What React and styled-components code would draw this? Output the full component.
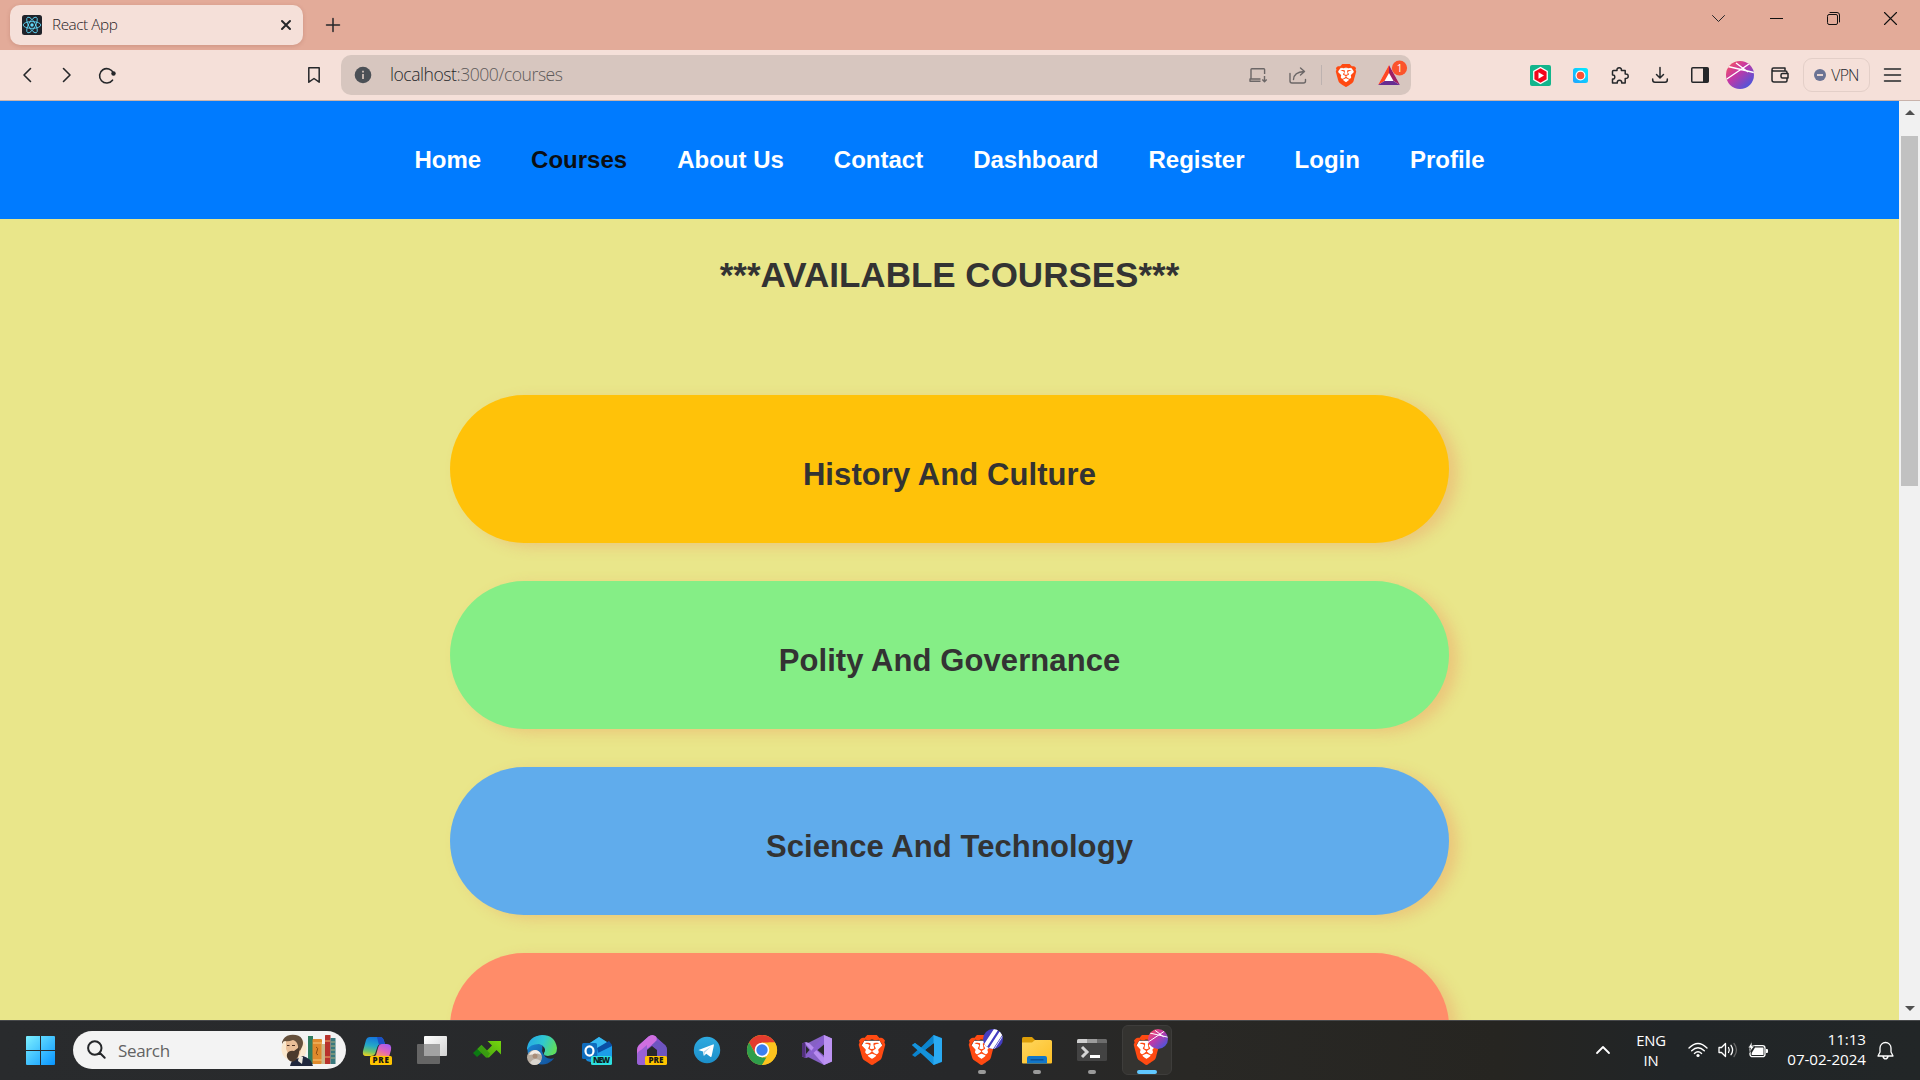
import React from "react";
import styled, { createGlobalStyle, css } from "styled-components";
import { SiBrave } from "react-icons/si";

const uiFont = `"Open Sans", "Noto Sans", sans-serif`;

const GlobalStyle = createGlobalStyle`
  * { box-sizing: border-box; }
  html, body { margin: 0; padding: 0; overflow: hidden; }
  svg { display: block; flex: none; overflow: visible; }
`;

const Screen = styled.div`
  width: 1920px;
  height: 1080px;
  display: flex;
  flex-direction: column;
  overflow: hidden;
  font-family: ${uiFont};
`;

/* ---------- browser chrome ---------- */

const TabStrip = styled.header`
  height: 50px;
  flex: none;
  display: flex;
  align-items: center;
  padding-left: 10px;
  background: #e3ab99;
`;

const Tab = styled.div`
  width: 293px;
  height: 40px;
  display: flex;
  align-items: center;
  padding: 0 12px;
  border-radius: 10px;
  background: #f5e0d9;
  box-shadow: 0 1px 4px rgba(120, 60, 40, 0.2);
`;

const TabTitle = styled.span`
  flex: 1;
  margin: -2px 0 0 10px;
  font-size: 15.3px;
  letter-spacing: -0.45px;
  font-weight: 350;
  color: #26211f;
`;

const NewTab = styled.div`
  width: 59px;
  display: flex;
  justify-content: center;
`;

const WindowControls = styled.div`
  height: 37px;
  margin: 0 1px auto auto;
  display: flex;
  align-items: center;
`;

const WindowButton = styled.div`
  width: 57.2px;
  display: flex;
  justify-content: center;
`;

const Toolbar = styled.div`
  height: 51px;
  flex: none;
  display: flex;
  align-items: center;
  padding: 0 7px;
  background: #f5e0d9;
  border-bottom: 1px solid #c9b3ab;
`;

const ToolCell = styled.div`
  width: ${(p) => p.$w || 40}px;
  height: 40px;
  display: flex;
  align-items: center;
  justify-content: center;
`;

const Spacer = styled.div`
  flex: ${(p) => (p.$w ? "none" : 1)};
  width: ${(p) => (p.$w ? p.$w + "px" : "auto")};
`;

const AddressBar = styled.div`
  width: 1070px;
  height: 40px;
  margin-left: 7px;
  display: flex;
  align-items: center;
  padding: 0 1px 0 13px;
  border-radius: 10px;
  background: #d7c6bf;
`;

const Url = styled.span`
  flex: 1;
  margin: -2px 0 0 18px;
  font-size: 17.6px;
  letter-spacing: -0.48px;
  font-weight: 350;
  color: #5e5a5a;
  b { font-weight: 350; color: #25272a; }
`;

const Divider = styled.div`
  width: 1px;
  height: 20px;
  margin: 0 4px 0 3px;
  background: #bdb2b0;
`;

const VpnButton = styled.div`
  width: 67px;
  height: 34px;
  margin: 0 3px;
  display: flex;
  align-items: center;
  justify-content: center;
  gap: 5px;
  border: 1px solid #e3cfc8;
  border-radius: 9px;
  font-size: 15.8px;
  font-weight: 350;
  letter-spacing: -0.8px;
  color: #25272a;
`;

/* ---------- web page ---------- */

const Viewport = styled.div`
  height: 919px;
  flex: none;
  display: flex;
`;

const Page = styled.main`
  width: 1899px;
  overflow: hidden;
  background: #e9e68a;
  font-family: "Liberation Sans", Arial, sans-serif;
`;

const NavBar = styled.nav`
  height: 118px;
  display: flex;
  align-items: center;
  justify-content: center;
  gap: 50px;
  background: #007bff;
`;

const NavLink = styled.a`
  font-size: 24px;
  font-weight: 700;
  color: ${(p) => (p.$active ? "#0b0f14" : "#fff")};
`;

const Heading = styled.h1`
  margin: 0;
  padding-top: 36px;
  height: 176px;
  font-size: 35px;
  line-height: 40px;
  text-align: center;
  color: #333;
`;

const CourseList = styled.div`
  display: flex;
  flex-direction: column;
  align-items: center;
  gap: 38px;
`;

const Course = styled.div`
  width: 999px;
  height: 148px;
  flex: none;
  display: flex;
  align-items: center;
  justify-content: center;
  padding-top: 11px;
  border-radius: 74px;
  background: ${(p) => p.$color};
  box-shadow: 9px 4px 14px rgba(240, 128, 90, 0.3);
  font-size: 31px;
  font-weight: 700;
  letter-spacing: 0.08px;
  color: #333;
`;

const ScrollTrack = styled.div`
  width: 21px;
  display: flex;
  flex-direction: column;
  align-items: center;
  background: #f1f1f1;
`;

const ScrollArrow = styled.div`
  width: 0;
  height: 0;
  border: 5px solid transparent;
  ${(p) =>
    p.$down
      ? css`border-top-color: #505050; border-bottom-width: 0; margin: auto 0 9px;`
      : css`border-bottom-color: #505050; border-top-width: 0; margin: 9px 0 21px;`}
`;

const ScrollThumb = styled.div`
  width: 17px;
  height: 350px;
  background: #c1c1c1;
`;

/* ---------- taskbar ---------- */

const Taskbar = styled.footer`
  height: 60px;
  flex: none;
  display: flex;
  align-items: center;
  box-shadow: inset 0 1px #47494b;
  background: linear-gradient(90deg, #292b2d 0%, #27282a 50%, #292825 62%, #262521 78%, #212527 87%, #222627 100%);
`;

const StartButton = styled.div`
  width: 73px;
  padding-left: 26px;
`;

const SearchBox = styled.div`
  width: 273px;
  height: 38px;
  margin-right: 3.5px;
  display: flex;
  align-items: center;
  padding: 0 10px 0 14px;
  border-radius: 19px;
  background: #f3f3f3;
`;

const SearchText = styled.span`
  flex: 1;
  margin-left: 11px;
  font-size: 17px;
  letter-spacing: -0.35px;
  color: #626262;
`;

const AppCell = styled.div`
  width: 55px;
  height: 60px;
  display: flex;
  flex-direction: column;
  align-items: center;
  padding-top: ${(p) => (p.$tall ? 9 : 15)}px;
`;

const AppTile = styled.div`
  width: 50px;
  height: 50px;
  margin-top: -10px;
  padding-top: 3px;
  display: flex;
  flex-direction: column;
  align-items: center;
  border: 1px solid #3e3d3b;
  border-radius: 6px;
  background: #343330;
`;

const Indicator = styled.div`
  width: ${(p) => (p.$active ? 20 : 8)}px;
  height: 4px;
  flex: none;
  margin-top: 5px;
  border-radius: 2px;
  background: ${(p) => (p.$active ? "#60c8ff" : "#9a9a9a")};
`;

const Tray = styled.div`
  margin-left: auto;
  display: flex;
  align-items: center;
  padding-right: 25px;
  color: #fff;
  font-size: 14.8px;
  line-height: 20px;
  letter-spacing: -0.2px;
`;

const Language = styled.div`
  width: 48px;
  margin: 0 13px 0 17px;
  text-align: center;
`;

const Clock = styled.div`
  width: 88px;
  margin: -2px 9px 0 10px;
  font-size: 15.2px;
  letter-spacing: -0.05px;
  text-align: right;
  white-space: nowrap;
`;

const TrayIcon = styled.div`
  width: ${(p) => p.$w}px;
  display: flex;
  justify-content: center;
`;

const IconText = styled.text`
  font-family: "Open Sans", sans-serif;
  font-weight: 800;
  font-size: ${(p) => p.$size || 8}px;
  text-anchor: middle;
`;

/* ---------- icons ---------- */

const Line = ({ w = 20, h = 20, d, color = "#25272a", sw = 1.5, vb, cap = "round" }) => (
  <svg width={w} height={h} viewBox={vb || `0 0 ${w} ${h}`} fill="none" stroke={color} strokeWidth={sw} strokeLinecap={cap} strokeLinejoin="round">
    <path d={d} />
  </svg>
);

const ReactFavicon = () => (
  <svg width="20" height="20" viewBox="0 0 20 20">
    <rect width="20" height="20" rx="2.500" fill="#20232a" />
    <g fill="none" stroke="#61dafb" strokeWidth="0.85">
      <ellipse cx="10" cy="10" rx="8.800" ry="3.400" />
      <ellipse cx="10" cy="10" rx="8.800" ry="3.400" transform="rotate(60 10 10)" />
      <ellipse cx="10" cy="10" rx="8.800" ry="3.400" transform="rotate(120 10 10)" />
    </g>
    <circle cx="10" cy="10" r="1.700" fill="#61dafb" />
  </svg>
);

const BraveMark = ({ w, h }) => (
  <svg width={w} height={h} viewBox="0 0 20 24" preserveAspectRatio="none">
    <path d="M4 4.500h12l2 4-3 10-5 3.500-5-3.500-3-10z" fill="#fff" />
    <svg x="-2" y="0" width="24" height="24" viewBox="0 0 24 24">
      <SiBrave size={24} color="#ff4a12" />
    </svg>
  </svg>
);

const BatIcon = () => (
  <svg width="34" height="40" viewBox="0 0 34 40">
    <path d="M13 10 24 30H2z" fill="#fff" />
    <path d="M13 10 2 30l6.500-4L13 18z" fill="#ff4724" />
    <path d="M13 10 24 30l-6.500-4L13 18z" fill="#9e1f63" />
    <path d="M2 30h22l-6.500-4H8.500z" fill="#662d91" />
    <circle cx="23.500" cy="13" r="7.600" fill="#fb542b" />
    <text x="23.500" y="16.500" fontSize="10" fill="#fff" textAnchor="middle" fontFamily="Open Sans, sans-serif">1</text>
  </svg>
);

const PlayerExtension = () => (
  <svg width="21" height="21" viewBox="0 0 21 21">
    <rect width="21" height="21" rx="2" fill="#12b58c" />
    <path d="M10.500 1.800 17.900 6v9l-7.400 4.200L3.100 15V6z" fill="#fff" />
    <path d="M10.500 3.300 16.600 6.800v7.400l-6.100 3.500-6.100-3.500V6.800z" fill="#f4061c" />
    <path d="m8.500 7.200 5.500 3.300-5.500 3.300z" fill="#fff" />
  </svg>
);

const RecorderExtension = () => (
  <svg width="15" height="15" viewBox="0 0 15 15">
    <defs>
      <linearGradient id="rec" x1="0" y1="1" x2="1" y2="0">
        <stop offset="0" stopColor="#1fa2ff" />
        <stop offset="1" stopColor="#00f0ff" />
      </linearGradient>
    </defs>
    <rect width="15" height="15" rx="2.500" fill="url(#rec)" />
    <circle cx="7.500" cy="7.500" r="5" fill="#fff" />
    <circle cx="7.500" cy="7.500" r="3.800" fill="#fb5237" />
  </svg>
);

const Avatar = ({ size, id = "avatar" }) => (
  <svg width={size} height={size} viewBox="0 0 28 28">
    <defs>
      <linearGradient id={id} x1="0.1" y1="0.1" x2="0.85" y2="0.9">
        <stop offset="0" stopColor="#f0506a" />
        <stop offset="0.4" stopColor="#c637a4" />
        <stop offset="1" stopColor="#4b55dc" />
      </linearGradient>
      <clipPath id={id + "c"}><circle cx="14" cy="14" r="14" /></clipPath>
    </defs>
    <g clipPath={`url(#${id}c)`}>
      <rect width="28" height="28" fill={`url(#${id})`} />
      <path d="M2 5.500 28 11.500M0 18.500 23 3M10 2l12 9" stroke="#fff" strokeWidth="1.400" fill="none" />
    </g>
  </svg>
);

const Wallet = () => (
  <svg width="18" height="16" viewBox="0 0 18 16" fill="none" stroke="#25272a" strokeWidth="1.500" strokeLinejoin="round">
    <path d="M1 3v10q0 2 2 2h11.500q1.500 0 1.500-1.500V5.500Q16 4 14.500 4H2.500Q1 4 1 2.500T2.500 1H14v3" />
    <path d="M17 6.500h-5.500q-1.500 0-1.500 1.500v1.500q0 1.500 1.500 1.500H17z" fill="#f5e0d9" />
  </svg>
);

const SidePanel = () => (
  <svg width="18" height="16" viewBox="0 0 18 16">
    <rect x="0.750" y="0.750" width="16.500" height="14.500" rx="1" fill="none" stroke="#25272a" strokeWidth="1.500" />
    <rect x="12" y="1" width="5" height="14" fill="#25272a" />
  </svg>
);

const Windows = () => (
  <svg width="29" height="29" viewBox="0 0 29 29">
    <defs>
      <linearGradient id="win" x1="0" y1="0" x2="1" y2="1">
        <stop offset="0" stopColor="#7df0ff" />
        <stop offset="1" stopColor="#0895ff" />
      </linearGradient>
    </defs>
    <path d="M1 0h13v14H0V1q0-1 1-1zM15 0h13q1 0 1 1v13H15zM0 15h14v14H1q-1 0-1-1zM15 15h14v13q0 1-1 1H15z" fill="url(#win)" />
  </svg>
);

const AuthorAndBooks = () => (
  <svg width="55" height="32" viewBox="0 0 55 32">
    <circle cx="13" cy="15" r="12.500" fill="#fbe9cf" />
    <rect x="27" y="2" width="5" height="28" fill="#2f7d5f" />
    <rect x="31.500" y="5" width="9.500" height="25" rx="1" fill="#e08a2c" />
    <path d="M32 9h9M32 26h9" stroke="#f6c878" strokeWidth="1.200" />
    <path d="M35 13q3 1 1 4t1 4" stroke="#8a4b12" fill="none" />
    <rect x="40.500" y="10" width="3.500" height="20" fill="#cbb98a" />
    <rect x="44" y="1" width="5.500" height="29" rx="0.500" fill="#b8322c" />
    <path d="M44 7h5.500M44 23h5.500" stroke="#edb36a" />
    <rect x="49.500" y="4" width="5" height="26" fill="#39797d" />
    <path d="M50 8h4M50 12h4M50 16h4M50 20h4M50 24h4" stroke="#c0b680" strokeWidth="0.900" />
    <path d="M9 32q1-6 6-7l7-3q8 2 10 10z" fill="#20273d" />
    <path d="m18 22 4 1-1 7-4-3z" fill="#ece7dd" />
    <path d="M5 7q5-4 12-1l3 6q0 7-3 12H9L5 15z" fill="#eabf98" />
    <path d="M1 8q2-6 8-7 9-1 12 4 2 4 0 8-1 3-3 4-1-2-1-5-1-5-5-6-5 2-8 1-2 0-3 3z" fill="#65503c" />
    <path d="M6 20q2-4 7-3l4-3 1-1q1 8-3 13-3 3-6 1-4-3-3-7z" fill="#4b3a2d" />
    <path d="M6 11.500h2.500M11 11.500h3" stroke="#4a3023" strokeWidth="1" />
  </svg>
);

const Copilot = () => (
  <svg width="30" height="30" viewBox="0 0 30 30">
    <defs>
      <linearGradient id="cpA" x1="0.4" y1="0" x2="0.2" y2="1">
        <stop offset="0" stopColor="#1577dc" />
        <stop offset="0.45" stopColor="#25a9c7" />
        <stop offset="0.75" stopColor="#6cc26c" />
        <stop offset="1" stopColor="#f0d21c" />
      </linearGradient>
      <linearGradient id="cpB" x1="0.8" y1="0" x2="0.2" y2="1">
        <stop offset="0" stopColor="#a55bf2" />
        <stop offset="0.5" stopColor="#e065b8" />
        <stop offset="1" stopColor="#ffa34d" />
      </linearGradient>
    </defs>
    <path d="M8 2h10q3 0 4 4l1 3h-4q-3 0-4 4l-2 6q-1 2-4 2H4q-4 0-3-5L4 5q1-3 4-3z" fill="url(#cpA)" />
    <path d="M15 2h3q3 0 4 4l1 3h-4l-2 1z" fill="#1c50c6" />
    <path d="M20 9h5q5 0 4 6l-2 7H12l2-2 2-7q1-4 4-4z" fill="url(#cpB)" />
    <rect x="8" y="21" width="22" height="9" rx="1.500" fill="#ffc400" />
    <IconText x="19" y="28.400" fill="#161616" letterSpacing="0.7">PRE</IconText>
  </svg>
);

const TaskView = () => (
  <svg width="30" height="30" viewBox="0 0 30 30">
    <defs>
      <linearGradient id="tv" x1="0" y1="0" x2="1" y2="1">
        <stop offset="0" stopColor="#fff" />
        <stop offset="1" stopColor="#d2d2d2" />
      </linearGradient>
    </defs>
    <rect x="0" y="9" width="23" height="20" rx="1" fill="#656565" />
    <rect x="7" y="1" width="23" height="20" rx="1" fill="url(#tv)" />
    <path d="M7 9h16v12H7z" fill="#a2a2a2" />
  </svg>
);

const TrendArrow = () => (
  <svg width="30" height="30" viewBox="0 0 30 30">
    <defs>
      <linearGradient id="tr" x1="0" y1="1" x2="1" y2="0">
        <stop offset="0" stopColor="#3f9d10" />
        <stop offset="1" stopColor="#76d70e" />
      </linearGradient>
    </defs>
    <path d="m1 18 8.500-8 4.500 4.500L5 22z" fill="#0c7a12" />
    <path d="M9.500 10 15 15.500l5-5L15.500 6H29v13.500l-4.500-4.500L17 22.500h-3L5.500 14z" fill="url(#tr)" />
    <path d="m9.500 10-4 4 8.500 8.500h1l3-4z" fill="#2c8f12" opacity="0.600" />
  </svg>
);

const Edge = () => (
  <svg width="30" height="30" viewBox="0 0 30 30">
    <defs>
      <linearGradient id="edA" x1="0" y1="0.300" x2="1" y2="0.600">
        <stop offset="0" stopColor="#25a9e6" />
        <stop offset="0.500" stopColor="#30c8d0" />
        <stop offset="1" stopColor="#62df55" />
      </linearGradient>
      <linearGradient id="edB" x1="0" y1="0" x2="1" y2="1">
        <stop offset="0" stopColor="#1b8ddd" />
        <stop offset="1" stopColor="#124d96" />
      </linearGradient>
    </defs>
    <circle cx="15" cy="15" r="14.500" fill="url(#edB)" />
    <path d="M0 13Q2 1 15 0q13 0 15 13 0 8-9 8-5 0-4-3 3-7-5-9Q3 9 0 15z" fill="url(#edA)" />
    <path d="M15 16q1-3 0-5 5 3 2 7-1 3 4 3 4 0 9-3 0 3-2 5-10 3-13-7z" fill="#27292b" />
    <circle cx="7.500" cy="22.500" r="7.500" fill="#b7aca0" />
    <path d="M2 20q2-5 7-5 4 1 5 5-4-3-6 0-3-1-6 0z" fill="#f1ece6" />
    <circle cx="8" cy="21" r="2.500" fill="#a98d78" />
    <path d="M3 28q4-7 11-2-2 4-7 4-2 0-4-2z" fill="#dad5cf" />
  </svg>
);

const Outlook = () => (
  <svg width="30" height="30" viewBox="0 0 30 30">
    <path d="m5 10 12-8 13 9v12H5z" fill="#1490df" />
    <path d="m8 8 9-6 8 5-11 8z" fill="#35b8f1" />
    <path d="m15 13 12-7 3 4v8l-12 5z" fill="#0a4ea5" />
    <path d="m16 18 14-7v10H16z" fill="#1c9de8" />
    <path d="M3 23h27l-15 6-10-3z" fill="#1788d8" />
    <rect x="0" y="8" width="15" height="16" rx="1.500" fill="#0f6cbd" />
    <ellipse cx="7.500" cy="16" rx="4" ry="4.600" fill="none" stroke="#fff" strokeWidth="2.200" />
    <rect x="9" y="21" width="21" height="9" rx="1.500" fill="#2ddfe0" />
    <IconText x="19.500" y="28.400" $size={8} textLength="17" fill="#0d1d1f">NEW</IconText>
  </svg>
);

const DevHome = () => (
  <svg width="30" height="30" viewBox="0 0 30 30">
    <path d="M2 10 11.500 1.500q3.500-3 7 0L28 10q2 2 2 5v11H20V15l-5-4-5 4v15H3q-3 0-3-3V15q0-3 2-5z" fill="#7a50c8" />
    <path d="M2 10 11.500 1.500q4-3 7.500 0 2 3-1 6L5 18q-5 3-5 8V15q0-3 2-5z" fill="#cf6fe0" />
    <path d="M0 20q0-3 4-5l6-5v20H3q-3 0-3-3z" fill="#9961d4" />
    <path d="m19 6 9 4q2 2 2 5v11H20V14l-5-4z" fill="#6d55c0" />
    <rect x="8" y="21" width="22" height="9" rx="1.500" fill="#ffc400" />
    <IconText x="19" y="28.400" fill="#161616">PRE</IconText>
  </svg>
);

const Telegram = () => (
  <svg width="30" height="30" viewBox="0 0 30 30">
    <defs>
      <linearGradient id="tg" x1="0" y1="0" x2="0" y2="1">
        <stop offset="0" stopColor="#2eaae0" />
        <stop offset="1" stopColor="#1c8fca" />
      </linearGradient>
    </defs>
    <circle cx="15" cy="15" r="13.200" fill="url(#tg)" />
    <path d="M6.500 15 21 9.400q1-.2.900.9l-2.300 11q-.3 1-1.300.4l-4-3-2 1.900q-.5.400-.600-.2l-.7-3.900-4-1.200q-1-.5-.5-.3z" fill="#fff" />
    <path d="m11.500 16.500 7.500-5-6 6-.8 3z" fill="#b9d9ea" />
  </svg>
);

const Chrome = () => (
  <svg width="30" height="30" viewBox="0 0 30 30">
    <circle cx="15" cy="15" r="15" fill="#fcc31e" />
    <path d="M2 7.500A15 15 0 0 1 28 7.500H15L8.500 18.750z" fill="#e33b2e" />
    <path d="M2 7.500 8.500 18.750 15 22.500h6.500L15 30A15 15 0 0 1 2 7.500z" fill="#2f9e4b" />
    <path d="M28 7.500A15 15 0 0 1 15 30l6.500-11.250L21.500 7.500z" fill="#fcc31e" />
    <circle cx="15" cy="15" r="7.300" fill="#fff" />
    <circle cx="15" cy="15" r="5.700" fill="#3b7ff0" />
  </svg>
);

const VisualStudio = () => (
  <svg width="30" height="30" viewBox="0 0 30 30">
    <path d="M0 8.500 3.500 7 6 8l16-8 8 3.500v23L22 30 6 22l-2.500 1L0 21.500z" fill="#8661c5" />
    <path d="M0 8.500 3.500 7v16L0 21.500z" fill="#52307c" />
    <path d="m3.500 7 3.500 1 16 15.500-1 6.500L3.500 9z" fill="#b78bf0" />
    <path d="M3.500 23 22 0v8L7 22z" fill="#8a5fd0" />
    <path d="m22 0 8 3.500v23L22 30z" fill="#bd93f2" />
    <path d="m4 11 3.500 4L4 19zM22 9.500V20.500L15.500 15z" fill="#28292b" />
  </svg>
);

const VsCode = () => (
  <svg width="30" height="30" viewBox="0 0 30 30">
    <path d="M21.500 0 30 3v24l-8.500 3L9 17.500 3 22l-3-2 5.500-5L0 10l3-2 6 4.500zM22 8.200 13.500 15 22 21.800z" fill="#0b84ce" fillRule="evenodd" />
    <path d="m3 8 19 14v8L0 10z" fill="#1593dc" />
    <path d="M21.500 0 30 3.500v23L21.500 30z" fill="#2aaaf2" />
    <path d="M22 8.200V21.800L13.500 15z" fill="#28292a" />
  </svg>
);

/* the profile badge hangs past the right edge of the shield */
const ProfileBrave = ({ striped }) => (
  <svg width="26" height="36" viewBox="0 0 26 36">
    <svg x="0" y="6" width="25" height="30" viewBox="0 0 25 30">
      <BraveMark w={25} h={30} />
    </svg>
    {striped ? (
      <g>
        <defs><clipPath id="stripe"><circle cx="24" cy="10" r="10" /></clipPath></defs>
        <circle cx="24" cy="10" r="10" fill="#443dc0" />
        <g clipPath="url(#stripe)">
          <path d="M15 19 28-1M21 21 34 1" stroke="#fff" strokeWidth="4" />
          <path d="M24 22 37 2" stroke="#dcdcff" strokeWidth="1" />
        </g>
      </g>
    ) : (
      <svg x="14" y="0" width="20" height="20"><Avatar size={20} id="avatarTask" /></svg>
    )}
  </svg>
);

const Folder = () => (
  <svg width="30" height="30" viewBox="0 0 30 30">
    <defs>
      <linearGradient id="fo" x1="0" y1="0" x2="1" y2="1">
        <stop offset="0" stopColor="#ffd75e" />
        <stop offset="1" stopColor="#fdbe25" />
      </linearGradient>
    </defs>
    <path d="M0 3.500Q0 2 1.500 2H10l3 3v3H0z" fill="#dd9e08" />
    <path d="M0 7.500h10L13 5h15.500Q30 5 30 6.500v21q0 1-1 1H1q-1 0-1-1z" fill="url(#fo)" />
    <path d="M5 28.500V23q0-2 2-2h16q2 0 2 2v5.500z" fill="#1276c8" />
    <path d="M8.500 24.800h13" stroke="#0b4f94" strokeWidth="1.400" />
  </svg>
);

const Terminal = () => (
  <svg width="30" height="30" viewBox="0 0 30 30">
    <rect y="4" width="30" height="22" rx="1.500" fill="#434343" />
    <path d="M0 8V5.500Q0 4 1.500 4H10v4z" fill="#cfcfcf" />
    <path d="M10 4h10v4H10z" fill="#9c9c9c" />
    <path d="M20 4h8.500Q30 4 30 5.500V8H20z" fill="#6d6d6d" />
    <path d="m5 12 5 5-5 5" fill="none" stroke="#d5d5d5" strokeWidth="3" />
    <path d="M13 21.500h10" stroke="#fff" strokeWidth="3" />
  </svg>
);

const PlainBrave = () => (
  <svg width="30" height="30" viewBox="0 0 30 30">
    <svg x="2" y="0" width="26" height="30"><BraveMark w={26} h={30} /></svg>
  </svg>
);

const Wifi = () => (
  <svg width="20" height="16" viewBox="0 0 20 16" fill="none" stroke="#fff" strokeWidth="1.400" strokeLinecap="round">
    <path d="M1 6Q10-3 19 6M3.700 8.800q6.300-6 12.600 0M6.400 11.400q3.600-3.200 7.200 0" />
    <circle cx="10" cy="13.500" r="1.600" fill="#fff" stroke="none" />
  </svg>
);

const Speaker = () => (
  <svg width="20" height="16" viewBox="0 0 20 16" fill="none" stroke="#fff" strokeWidth="1.300" strokeLinecap="round" strokeLinejoin="round">
    <path d="M1 5.500h2.500L7.500 1.500v13l-4-4H1zM10.500 5.500q1.600 2.500 0 5M13 3.300q3.200 4.700 0 9.400" />
    <path d="M16 1.500q5 6.500 0 13" stroke="#666" />
  </svg>
);

const Battery = () => (
  <svg width="20" height="16" viewBox="0 0 20 16">
    <rect x="2" y="3.700" width="15" height="11" rx="2.500" fill="none" stroke="#fff" strokeWidth="1.300" />
    <path d="M7 5.500h8.500v7.400H3.700V11z" fill="#fff" />
    <path d="M18 7h1q1 0 1 1v2q0 1-1 1h-1z" fill="#fff" />
    <path d="M4-.5 0 6h2.500L1.500 10.500 6.500 4H4z" fill="#fff" stroke="#212527" strokeWidth="0.700" />
  </svg>
);

const Bell = () => (
  <svg width="17" height="19" viewBox="0 0 17 19" fill="none" stroke="#fff" strokeWidth="1.300" strokeLinejoin="round">
    <path d="M3 7a5.500 5.500 0 0 1 11 0v4l2 4H1l2-4zM6 15.500q.5 2.300 2.500 2.300t2.500-2.300" />
  </svg>
);

const navItems = ["Home", "Courses", "About Us", "Contact", "Dashboard", "Register", "Login", "Profile"];

const courses = [
  { name: "History And Culture", color: "#ffc209" },
  { name: "Polity And Governance", color: "#85ee86" },
  { name: "Science And Technology", color: "#60acec" },
  { name: "", color: "#ff8c69" },
];

const taskApps = [Copilot, TaskView, TrendArrow, Edge, Outlook, DevHome, Telegram, Chrome, VisualStudio, PlainBrave, VsCode];

const puzzle =
  "M2.500 3.500H6Q5.700.800 8.200.800T10.400 3.500H14.200V7q3-.3 3 2.200t-3 2.300V16H10.700q.3-2.700-2.200-2.700T6.300 16H1.500V12q2.300.2 2.300-2T1.500 8V4.500q0-1 1-1z";

export default function App() {
  return (
    <Screen>
      <GlobalStyle />
      <TabStrip>
        <Tab>
          <ReactFavicon />
          <TabTitle>React App</TabTitle>
          <Line w={10} h={10} d="M1 1l8 8M9 1l-8 8" sw={2} />
        </Tab>
        <NewTab>
          <Line w={14} h={14} d="M7 .5v13M.5 7h13" sw={1.5} />
        </NewTab>
        <WindowControls>
          <WindowButton><Line w={13} h={7} d="M.5.5l6 6 6-6" sw={1} /></WindowButton>
          <WindowButton><Line w={13} h={1} d="M0 .5h13" sw={1} cap="butt" color="#111" /></WindowButton>
          <WindowButton><Line w={13} h={13} d="M.5 4Q.5 2.500 2 2.500h7q1.500 0 1.500 1.500v7q0 1.500-1.500 1.500H2Q.5 12.500.5 11zM3 .5h7q2.500 0 2.500 2.500v7" sw={1} color="#111" /></WindowButton>
          <WindowButton><Line w={13} h={13} d="M.5.5l12 12M12.500.5l-12 12" sw={1.1} color="#111" /></WindowButton>
        </WindowControls>
      </TabStrip>

      <Toolbar>
        <ToolCell><Line w={8} h={14} d="M7.500.5 1 7l6.500 6.500" sw={1.6} /></ToolCell>
        <ToolCell><Line w={8} h={14} d="M.5.5 7 7 .5 13.500" sw={1.6} /></ToolCell>
        <ToolCell>
          <svg width="18" height="17" viewBox="0 0 18 17" fill="none" stroke="#25272a" strokeWidth="1.600" strokeLinecap="round">
            <path d="M14.500 13.200A7.200 7.200 0 1 1 15.400 6" />
            <circle cx="15.500" cy="6.500" r="2.200" fill="#25272a" stroke="none" />
          </svg>
        </ToolCell>
        <Spacer $w={167} />
        <ToolCell><Line w={12} h={16} d="M.8.8h10.400v14.400L6 11.500.8 15.200z" /></ToolCell>
        <AddressBar>
          <svg width="18" height="18" viewBox="0 0 18 18">
            <circle cx="9" cy="9" r="8.300" fill="#4b5056" />
            <path d="M9 8v5M9 4.700v1.700" stroke="#d7c6bf" strokeWidth="1.700" />
          </svg>
          <Url><b>localhost</b>:3000/courses</Url>
          <ToolCell>
            <svg width="18" height="15" viewBox="0 0 18 15" fill="none" stroke="#6c6767" strokeWidth="1.400" strokeLinejoin="round">
              <path d="M11.500 13.300H1V11h10.500M2 11V1.500Q2 .7 2.800.7h12q.8 0 .8.8V6M15.500 8v5.500M13.300 11.500l2.200 2.200 2.200-2.200" />
            </svg>
          </ToolCell>
          <ToolCell>
            <Line w={18} h={17} d="M1 6.500V14q0 2 2 2h11.500q2 0 2-2v-1.500M4.500 12.500Q5 5 15 4.500M11.500 1 15.500 4.500 11.500 8" sw={1.4} color="#6c6767" />
          </ToolCell>
          <Divider />
          <ToolCell><BraveMark w={20} h={23} /></ToolCell>
          <ToolCell $w={44}><Spacer $w={10} /><BatIcon /></ToolCell>
        </AddressBar>
        <Spacer />
        <ToolCell><PlayerExtension /></ToolCell>
        <ToolCell><RecorderExtension /></ToolCell>
        <ToolCell><Line w={18} h={17} d={puzzle} /></ToolCell>
        <ToolCell><Line w={16} h={16} d="M8 .5v10M4.500 7.500 8 11l3.500-3.500M.7 12v1q0 2.200 2.200 2.200h10.200q2.200 0 2.200-2.200v-1" /></ToolCell>
        <ToolCell><SidePanel /></ToolCell>
        <ToolCell><Avatar size={28} /></ToolCell>
        <ToolCell><Wallet /></ToolCell>
        <VpnButton>
          <svg width="12" height="12" viewBox="0 0 12 12">
            <circle cx="6" cy="6" r="6" fill="#6b7394" />
            <path d="M3 6h6" stroke="#f5e0d9" strokeWidth="1.800" />
          </svg>
          VPN
        </VpnButton>
        <ToolCell $w={38}><Line w={17} h={14} d="M.5 1h16M.5 7h16M.5 13h16" /></ToolCell>
        <Spacer $w={2} />
      </Toolbar>

      <Viewport>
        <Page>
          <NavBar>
            {navItems.map((item) => (
              <NavLink key={item} $active={item === "Courses"}>{item}</NavLink>
            ))}
          </NavBar>
          <Heading>***AVAILABLE COURSES***</Heading>
          <CourseList>
            {courses.map((c) => (
              <Course key={c.color} $color={c.color}>{c.name}</Course>
            ))}
          </CourseList>
        </Page>
        <ScrollTrack>
          <ScrollArrow />
          <ScrollThumb />
          <ScrollArrow $down />
        </ScrollTrack>
      </Viewport>

      <Taskbar>
        <StartButton><Windows /></StartButton>
        <SearchBox>
          <Line w={20} h={20} d="M14.500 8A6.700 6.700 0 1 1 1.100 8a6.700 6.700 0 0 1 13.400 0M12.700 12.700l5 5" sw={2} />
          <SearchText>Search</SearchText>
          <AuthorAndBooks />
        </SearchBox>
        {taskApps.map((Icon, i) => (
          <AppCell key={i}><Icon /></AppCell>
        ))}
        <AppCell $tall><ProfileBrave striped /><Indicator /></AppCell>
        <AppCell><Folder /><Indicator /></AppCell>
        <AppCell><Terminal /><Indicator /></AppCell>
        <AppCell>
          <AppTile><ProfileBrave /><Indicator $active /></AppTile>
        </AppCell>
        <Tray>
          <TrayIcon $w={14}><Line w={14} h={8} d="M1 7l6-6 6 6" sw={1.8} color="#fff" /></TrayIcon>
          <Language>ENG<br />IN</Language>
          <TrayIcon $w={20}><Wifi /></TrayIcon>
          <TrayIcon $w={40}><Speaker /></TrayIcon>
          <TrayIcon $w={20}><Battery /></TrayIcon>
          <Clock>11:13<br />07-02-2024</Clock>
          <TrayIcon $w={20}><Bell /></TrayIcon>
        </Tray>
      </Taskbar>
    </Screen>
  );
}
